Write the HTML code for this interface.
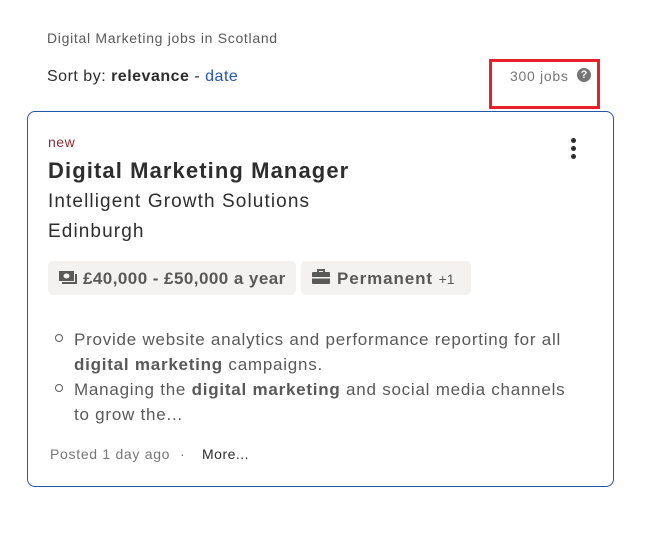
<!DOCTYPE html>
<html><head><meta charset="utf-8"><style>
*{margin:0;padding:0;box-sizing:border-box}
body{width:667px;height:535px;background:#fff;font-family:"Liberation Sans",sans-serif;position:relative;overflow:hidden;color:#2d2d2d}
.a{position:absolute;white-space:nowrap}
</style></head><body>
<div class="a" style="left:47px;top:30px;font-size:14px;color:#595959;letter-spacing:0.7px">Digital Marketing jobs in Scotland</div>
<div class="a" style="left:47px;top:68px;font-size:16px;color:#2d2d2d;letter-spacing:0.5px">Sort by: <b>relevance</b> - <span style="color:#2557a7">date</span></div>
<div class="a" style="left:489px;top:59px;width:111px;height:50px;border:3px solid #e8202a"></div>
<div class="a" style="left:510px;top:68px;font-size:14px;color:#767676;letter-spacing:0.7px">300 jobs</div>
<div class="a" style="left:577px;top:68px;width:14px;height:14px;border-radius:50%;background:#767676;color:#fff;font-size:11px;font-weight:bold;text-align:center;line-height:14px">?</div>
<div class="a" style="left:27px;top:111px;width:587px;height:376px;border:1px solid #2557a7;border-radius:8px"></div>
<div class="a" style="left:571px;top:138px;width:5px;height:5px;border-radius:50%;background:#2d2d2d"></div>
<div class="a" style="left:571px;top:146px;width:5px;height:5px;border-radius:50%;background:#2d2d2d"></div>
<div class="a" style="left:571px;top:154px;width:5px;height:5px;border-radius:50%;background:#2d2d2d"></div>
<div class="a" style="left:48px;top:134px;font-size:14px;color:#8a2e3a;letter-spacing:0.5px">new</div>
<div class="a" style="left:48px;top:158px;font-size:22px;font-weight:bold;letter-spacing:1.1px">Digital Marketing Manager</div>
<div class="a" style="left:48px;top:191px;font-size:19px;letter-spacing:1.1px">Intelligent Growth Solutions</div>
<div class="a" style="left:48px;top:221px;font-size:19px;letter-spacing:1.1px">Edinburgh</div>
<div class="a" style="left:48px;top:261px;width:248px;height:34px;background:#f3f2f1;border-radius:5px"></div>
<svg class="a" style="left:58px;top:269px" width="20" height="18" viewBox="0 0 20 18"><rect x="1" y="2" width="15" height="10" fill="#595959"/><ellipse cx="8.5" cy="7" rx="3" ry="2.5" fill="#f3f2f1"/><path d="M18 5v9H4" stroke="#595959" stroke-width="2" fill="none"/></svg>
<div class="a" style="left:83px;top:269px;font-size:17px;font-weight:bold;color:#595959;letter-spacing:0.45px">£40,000 - £50,000 a year</div>
<div class="a" style="left:301px;top:261px;width:170px;height:34px;background:#f3f2f1;border-radius:5px"></div>
<svg class="a" style="left:312px;top:269px" width="18" height="16" viewBox="0 0 18 16"><path d="M6 3V1h6v2" stroke="#595959" stroke-width="2" fill="none"/><rect x="0" y="3" width="18" height="12" rx="1" fill="#595959"/><rect x="0" y="8" width="18" height="1.5" fill="#f3f2f1"/></svg>
<div class="a" style="left:337px;top:269px;font-size:17px;font-weight:bold;color:#595959;letter-spacing:0.9px">Permanent <span style="font-weight:normal;font-size:14px;letter-spacing:0">+1</span></div>
<div class="a" style="left:55px;top:334px;width:8px;height:8px;border:1.5px solid #595959;border-radius:50%"></div>
<div class="a" style="left:55px;top:384px;width:8px;height:8px;border:1.5px solid #595959;border-radius:50%"></div>
<div class="a" style="left:74px;top:327px;font-size:17px;line-height:25px;color:#595959;letter-spacing:0.76px">Provide website analytics and performance reporting for all<br><b>digital marketing</b> campaigns.<br>Managing the <b>digital marketing</b> and social media channels<br>to grow the...</div>
<div class="a" style="left:50px;top:446px;font-size:14px;color:#767676;letter-spacing:0.7px">Posted 1 day ago</div>
<div class="a" style="left:180px;top:446px;font-size:14px;color:#767676">·</div>
<div class="a" style="left:202px;top:446px;font-size:14px;color:#2d2d2d;letter-spacing:0.5px">More...</div>
</body></html>
